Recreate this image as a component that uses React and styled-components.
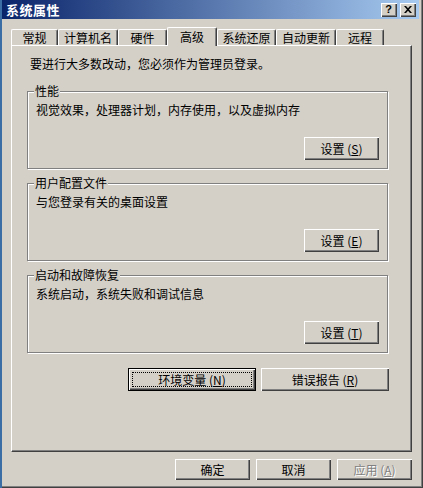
import React from "react";
import styled, { createGlobalStyle, css } from "styled-components";

const GlobalStyle = createGlobalStyle`
  html, body {
    margin: 0;
    padding: 0;
    background: #3a6ea5;
  }
  * {
    box-sizing: border-box;
  }
`;

const raised = css`
  box-shadow: inset 1px 1px #ffffff, inset -1px -1px #404040, inset -2px -2px #808080;
`;

const Window = styled.div`
  width: 421px;
  height: 488px;
  margin-left: 2px;
  background: #d4d0c8;
  border-right: 1px solid #404040;
  border-bottom: 1px solid #404040;
  box-shadow: inset -1px -1px #808080;
  display: flex;
  flex-direction: column;
  font-family: "Noto Sans CJK SC", "Noto Sans", sans-serif;
  font-size: 12px;
  color: #000;
`;

const TitleBar = styled.div`
  height: 19px;
  margin-right: 3px;
  padding: 0 3px 0 4px;
  display: flex;
  align-items: center;
  justify-content: space-between;
  background: linear-gradient(to right, #0a246a, #a6caf0);
`;

const Title = styled.span`
  color: #fff;
  font-weight: bold;
  font-size: 13px;
  line-height: 15px;
  letter-spacing: 0.5px;
`;

const TitleButtons = styled.div`
  display: flex;
  gap: 3px;
`;

const TitleButton = styled.div`
  width: 16px;
  height: 14px;
  background: #d4d0c8;
  ${raised}
  display: flex;
  align-items: center;
  justify-content: center;
  font-family: "Liberation Sans", Arial, sans-serif;
  font-weight: bold;
  font-size: 11px;
  line-height: 1;
  padding: 0 1px 1px 0;
`;

const Body = styled.div`
  padding: 8px 0 0 9px;
  display: flex;
  flex-direction: column;
`;

const TabRow = styled.div`
  height: 18px;
  display: flex;
  align-items: flex-end;
  position: relative;
  z-index: 1;
`;

const Tab = styled.div`
  width: ${(p) => p.$w}px;
  height: ${(p) => (p.$active ? 19 : 16)}px;
  margin-bottom: ${(p) => (p.$active ? -1 : 0)}px;
  background: #d4d0c8;
  border-top: 1px solid #fff;
  border-left: 1px solid #fff;
  border-right: 1px solid #404040;
  border-top-left-radius: 2px;
  border-top-right-radius: 2px;
  box-shadow: inset -1px 0 #808080;
  display: flex;
  justify-content: center;
  align-items: ${(p) => (p.$active ? "flex-start" : "center")};
  padding-top: ${(p) => (p.$active ? 1 : 0)}px;
  line-height: 15px;
  white-space: nowrap;
`;

const Panel = styled.div`
  width: 401px;
  height: 407px;
  border-top: 1px solid #fff;
  border-left: 1px solid #fff;
  border-right: 1px solid #404040;
  border-bottom: 1px solid #404040;
  box-shadow: inset -1px -1px #808080;
  padding: 10px 0 0 15px;
  display: flex;
  flex-direction: column;
`;

const Notice = styled.p`
  margin: 0 0 20px 3px;
  line-height: 15px;
`;

const Groups = styled.div`
  display: flex;
  flex-direction: column;
  gap: 14px;
`;

const Group = styled.div`
  position: relative;
  width: 361px;
  height: 78px;
  border: 1px solid #808080;
  box-shadow: inset 1px 1px #fff, 1px 1px #fff;
  padding: 10px 8px 8px 8px;
  display: flex;
  flex-direction: column;
`;

const Legend = styled.span`
  position: absolute;
  top: -9px;
  left: 6px;
  padding: 0 1px;
  background: #d4d0c8;
  line-height: 15px;
`;

const Desc = styled.div`
  line-height: 15px;
`;

const GroupActions = styled.div`
  margin-top: auto;
  display: flex;
  justify-content: flex-end;
`;

const Button = styled.button`
  position: relative;
  width: ${(p) => p.$w || 75}px;
  height: ${(p) => p.$h || 23}px;
  padding: 0;
  margin: 0;
  border: ${(p) => (p.$default ? "1px solid #000" : "none")};
  background: #d4d0c8;
  ${raised}
  font-family: inherit;
  font-size: 12px;
  line-height: 15px;
  color: ${(p) => (p.disabled ? "#808080" : "#000")};
  text-shadow: ${(p) => (p.disabled ? "1px 1px #fff" : "none")};
  cursor: default;

  u {
    text-decoration: underline;
    text-underline-offset: 1px;
  }

  ${(p) =>
    p.$default &&
    css`
      &::after {
        content: "";
        position: absolute;
        inset: 3px;
        border: 1px dotted #000;
      }
    `}
`;

const ActionRow = styled.div`
  width: 362px;
  margin-top: 15px;
  display: flex;
  justify-content: flex-end;
  gap: 5px;
`;

const Footer = styled.div`
  width: 401px;
  margin-top: 7px;
  display: flex;
  justify-content: flex-end;
  gap: 6px;
`;

const tabs = [
  { label: "常规", w: 47 },
  { label: "计算机名", w: 60 },
  { label: "硬件", w: 49 },
  { label: "高级", w: 50, active: true },
  { label: "系统还原", w: 59 },
  { label: "自动更新", w: 60 },
  { label: "远程", w: 48 },
];

const groups = [
  { title: "性能", desc: "视觉效果，处理器计划，内存使用，以及虚拟内存", key: "S" },
  { title: "用户配置文件", desc: "与您登录有关的桌面设置", key: "E" },
  { title: "启动和故障恢复", desc: "系统启动，系统失败和调试信息", key: "T" },
];

function CloseGlyph() {
  return (
    <svg width="8" height="7" viewBox="0 0 8 7">
      <path d="M0 0h2l2 2.2L6 0h2L5 3.5 8 7H6L4 4.8 2 7H0l3-3.5z" fill="#000" />
    </svg>
  );
}

export default function App() {
  return (
    <>
      <GlobalStyle />
      <Window>
        <TitleBar>
          <Title>系统属性</Title>
          <TitleButtons>
            <TitleButton>?</TitleButton>
            <TitleButton>
              <CloseGlyph />
            </TitleButton>
          </TitleButtons>
        </TitleBar>
        <Body>
          <TabRow>
            {tabs.map((t) => (
              <Tab key={t.label} $w={t.w} $active={t.active}>
                {t.label}
              </Tab>
            ))}
          </TabRow>
          <Panel>
            <Notice>要进行大多数改动，您必须作为管理员登录。</Notice>
            <Groups>
              {groups.map((g) => (
                <Group key={g.title}>
                  <Legend>{g.title}</Legend>
                  <Desc>{g.desc}</Desc>
                  <GroupActions>
                    <Button>
                      设置 (<u>{g.key}</u>)
                    </Button>
                  </GroupActions>
                </Group>
              ))}
            </Groups>
            <ActionRow>
              <Button $w={128} $default>
                环境变量 (<u>N</u>)
              </Button>
              <Button $w={128}>
                错误报告 (<u>R</u>)
              </Button>
            </ActionRow>
          </Panel>
          <Footer>
            <Button $h={21}>确定</Button>
            <Button $h={21}>取消</Button>
            <Button $h={21} disabled>
              应用 (<u>A</u>)
            </Button>
          </Footer>
        </Body>
      </Window>
    </>
  );
}
